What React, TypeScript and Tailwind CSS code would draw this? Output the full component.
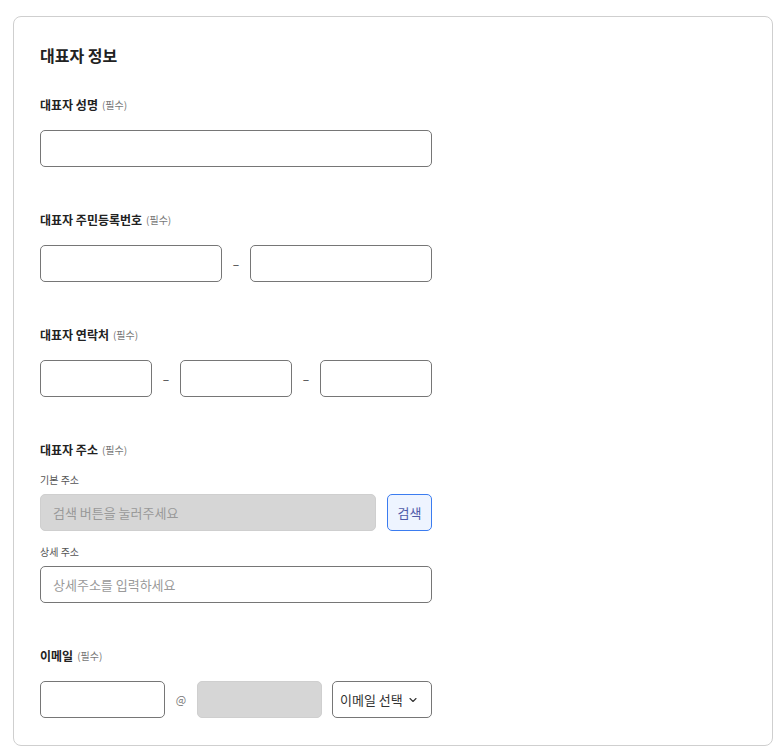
import React from 'react';

const font = { fontFamily: '"Noto Sans CJK KR", "Noto Sans", sans-serif' };

const inputCls =
  'h-[37px] rounded-[5px] border border-[#767676] bg-white px-3 text-[13px] text-[#333] placeholder:text-[#9a9a9a] outline-none';

function Label({ text }: { text: string }) {
  return (
    <div className="flex h-[18px] items-center text-[12px] font-bold leading-[18px] text-[#222]">
      {text}
      <span className="ml-1 text-[10px] font-normal text-[#777]">(필수)</span>
    </div>
  );
}

function Dash() {
  return <span className="flex w-[28px] justify-center text-[12px] text-[#333]">–</span>;
}

export default function App() {
  return (
    <div className="min-h-screen bg-white pt-4" style={font}>
      <div className="ml-[13px] w-[760px] rounded-[8px] border border-[#cfcfcf] px-[26px] pb-[27px] pt-[26px]">
        <h2 className="text-[16px] font-bold leading-[24px] text-[#222]">대표자 정보</h2>

        <div className="mt-[29px] w-[392px]">
          <Label text="대표자 성명" />
          <input className={`${inputCls} mt-[16px] w-full`} />
        </div>

        <div className="mt-[44px] w-[392px]">
          <Label text="대표자 주민등록번호" />
          <div className="mt-[16px] flex items-center">
            <input className={`${inputCls} w-[182px]`} />
            <Dash />
            <input className={`${inputCls} w-[182px]`} />
          </div>
        </div>

        <div className="mt-[44px] w-[392px]">
          <Label text="대표자 연락처" />
          <div className="mt-[16px] flex items-center">
            <input className={`${inputCls} w-[112px]`} />
            <Dash />
            <input className={`${inputCls} w-[112px]`} />
            <Dash />
            <input className={`${inputCls} w-[112px]`} />
          </div>
        </div>

        <div className="mt-[44px] w-[392px]">
          <Label text="대표자 주소" />
          <div className="mt-[14px] text-[10px] leading-[14px] text-[#555]">기본 주소</div>
          <div className="mt-[7px] flex items-center gap-[11px]">
            <input
              disabled
              placeholder="검색 버튼을 눌러주세요"
              className="h-[37px] w-[336px] rounded-[5px] border border-[#cfcfcf] bg-[#d6d6d6] px-3 text-[13px] placeholder:text-[#999]"
            />
            <button className="h-[37px] w-[45px] rounded-[5px] border border-[#3b7cf0] bg-[#eef4ff] text-[13px] text-[#4f5aa8]">
              검색
            </button>
          </div>
          <div className="mt-[14px] text-[10px] leading-[14px] text-[#555]">상세 주소</div>
          <input placeholder="상세주소를 입력하세요" className={`${inputCls} mt-[7px] w-full`} />
        </div>

        <div className="mt-[44px] w-[392px]">
          <Label text="이메일" />
          <div className="mt-[16px] flex items-center">
            <input className={`${inputCls} w-[125px]`} />
            <span className="flex w-[32px] justify-center text-[11px] text-[#777]">@</span>
            <input disabled className="h-[37px] w-[125px] rounded-[5px] border border-[#cfcfcf] bg-[#d6d6d6]" />
            <button className="ml-[10px] flex h-[37px] w-[100px] items-center justify-between rounded-[5px] border border-[#767676] bg-white pl-[7px] pr-[12px] text-[13px] text-[#333]">
              <span>이메일 선택</span>
              <svg width="12" height="12" viewBox="0 0 24 24" fill="none" stroke="#333" strokeWidth="2.2" strokeLinecap="round" strokeLinejoin="round">
                <path d="m6 9 6 6 6-6" />
              </svg>
            </button>
          </div>
        </div>
      </div>
    </div>
  );
}
